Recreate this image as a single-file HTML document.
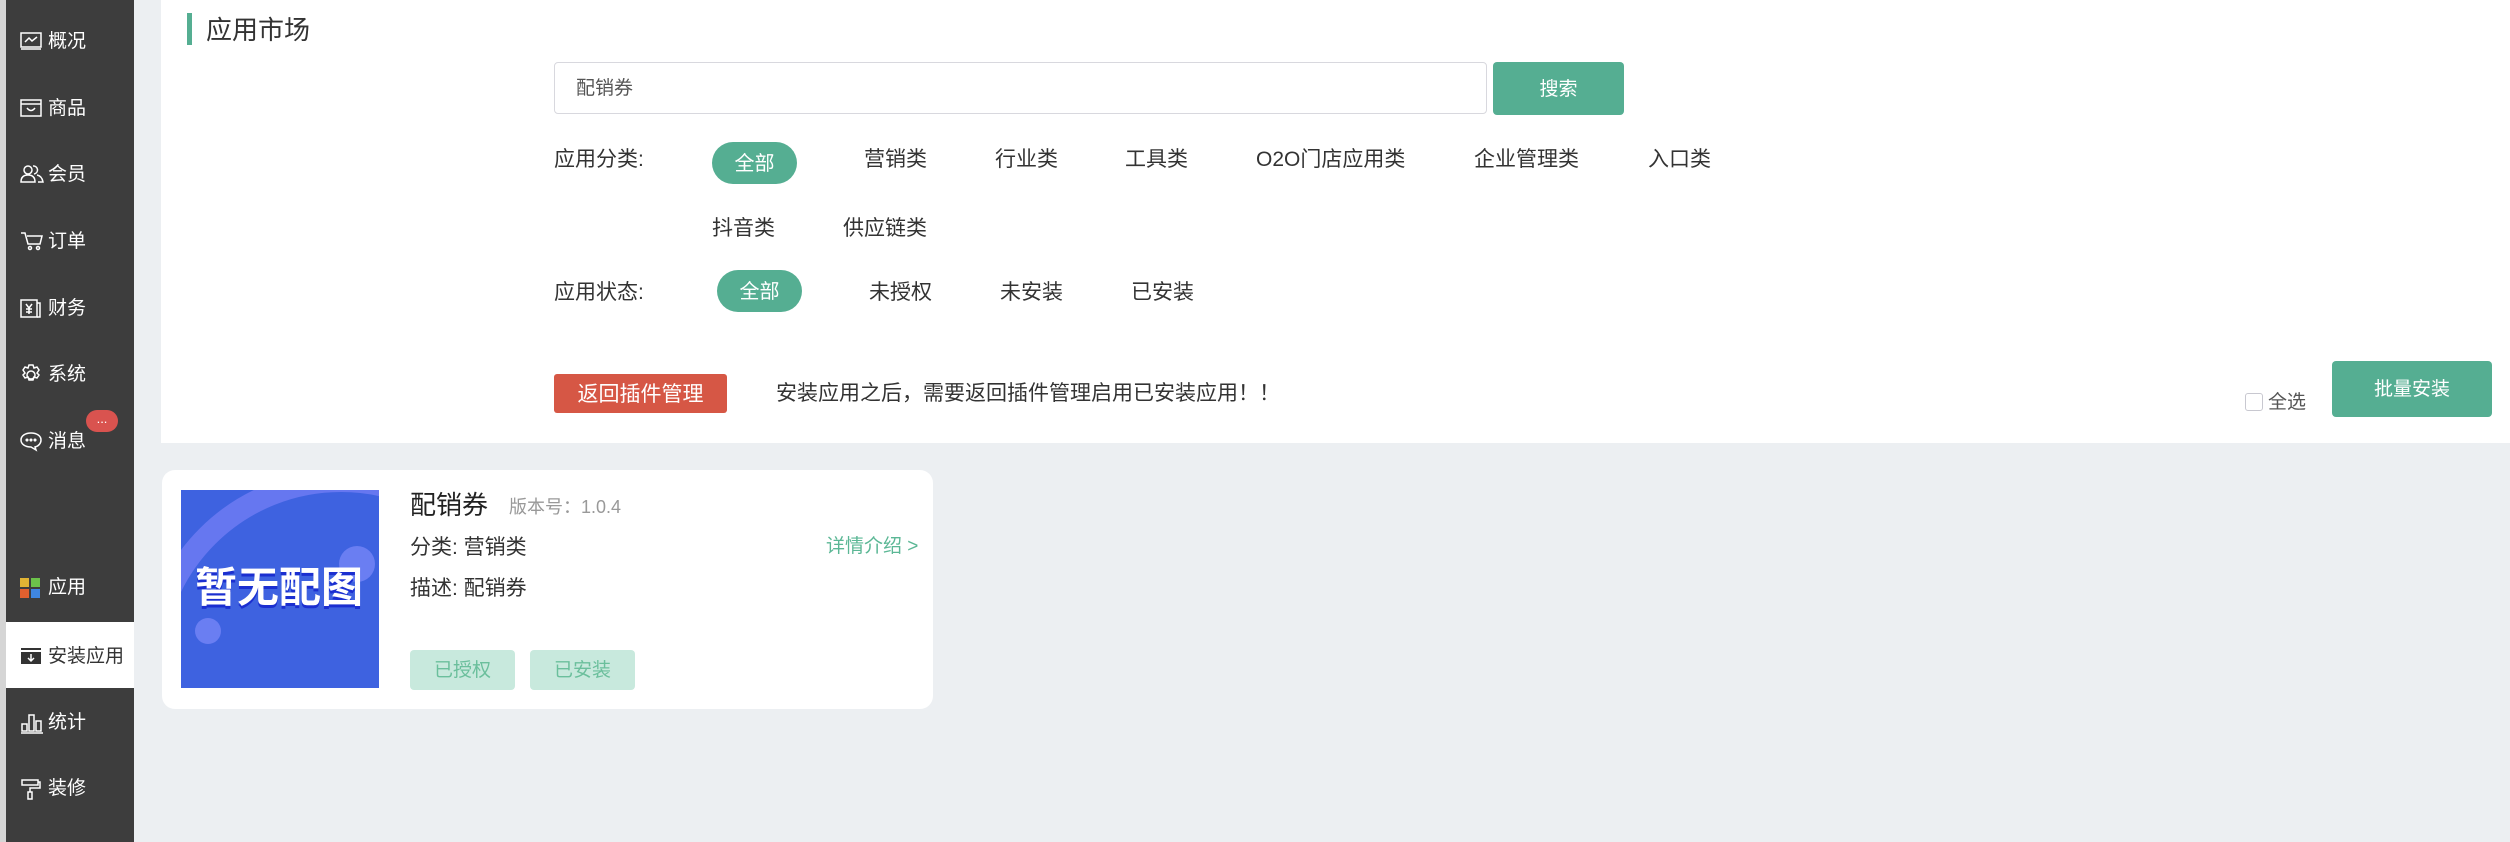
<!DOCTYPE html>
<html><head><meta charset="utf-8"><style>
*{margin:0;padding:0;box-sizing:border-box}
body{width:2510px;height:842px;background:#eceff2;position:relative;overflow:hidden;font-family:"Liberation Sans","Noto Sans CJK SC",sans-serif;color:#333}
.a{position:absolute;white-space:nowrap}
#strip{left:0;top:0;width:6px;height:842px;background:#d5d5d5}
#side{left:6px;top:0;width:128px;height:842px;background:#3d3d3d}
.it{position:absolute;left:6px;width:128px;height:66px;color:#fff;font-size:19px;line-height:66px}
.it span{position:absolute;left:42px;top:2px}
.it svg{position:absolute;left:14px;top:24px}
#panel{left:161px;top:0;width:2349px;height:443px;background:#fff}
.pill{position:absolute;background:#55ae92;color:#fff;border-radius:21px;text-align:center;font-size:20px}
.t{font-size:21px;color:#333;line-height:30px}
</style></head><body>
<div class="a" id="strip"></div>
<div class="a" id="side"></div>
<div class="it" style="top:7px"><svg width="22" height="20" viewBox="0 0 22 20" fill="none" stroke="#fff" stroke-width="1.5"><rect x="1" y="2" width="20" height="14"/><path d="M1 18h20M5 11l4-4 3 3 5-4"/></svg><span>概况</span></div>
<div class="it" style="top:74px"><svg width="22" height="20" viewBox="0 0 22 20" fill="none" stroke="#fff" stroke-width="1.5"><rect x="1" y="2" width="20" height="16"/><path d="M1 6h20M7 10q4 5 8 0"/></svg><span>商品</span></div>
<div class="it" style="top:140px"><svg width="24" height="20" viewBox="0 0 24 20" fill="none" stroke="#fff" stroke-width="1.5"><circle cx="8" cy="6" r="4"/><path d="M1 18q0-7 7-7t7 7z"/><path d="M13 2a4 4 0 1 1 1 8M17 11q5 1 6 7h-5"/></svg><span>会员</span></div>
<div class="it" style="top:207px"><svg width="24" height="20" viewBox="0 0 24 20" fill="none" stroke="#fff" stroke-width="1.5"><path d="M1 2h4l3 11h12l2-8H7"/><circle cx="10" cy="17" r="1.5"/><circle cx="18" cy="17" r="1.5"/></svg><span>订单</span></div>
<div class="it" style="top:274px"><svg width="22" height="22" viewBox="0 0 22 22" fill="none" stroke="#fff" stroke-width="1.5"><rect x="1" y="2" width="16" height="17"/><path d="M17 5h3v14h-3M6 6l3 4 3-4M9 10v6M6 11h6M6 14h6"/></svg><span>财务</span></div>
<div class="it" style="top:340px"><svg width="22" height="22" viewBox="0 0 22 22" fill="none" stroke="#fff" stroke-width="1.5"><circle cx="11" cy="11" r="4"/><path d="M9 1h4l1 3 3-1 2 3-2 3 2 2-2 3-3-1-1 3H9l-1-3-3 1-2-3 2-2-2-3 2-3 3 1z"/></svg><span>系统</span></div>
<div class="it" style="top:407px"><svg width="24" height="22" viewBox="0 0 24 22" fill="none" stroke="#fff" stroke-width="1.5"><path d="M11 2C5 2 1 5 1 9s4 7 10 7l5 3-1-3c4-1 6-4 6-7 0-4-4-7-10-7z"/><circle cx="7" cy="9" r=".8"/><circle cx="11" cy="9" r=".8"/><circle cx="15" cy="9" r=".8"/></svg><span>消息</span></div>
<div class="a" style="left:86px;top:410px;width:32px;height:22px;border-radius:11px;background:#d9534f;color:#fff;font-size:13px;text-align:center;line-height:18px">...</div>
<div class="it" style="top:553px"><svg width="22" height="22" viewBox="0 0 22 22"><rect x="0" y="1" width="9" height="9" fill="#e0b434"/><rect x="11" y="1" width="9" height="9" fill="#6cc24a"/><rect x="0" y="12" width="9" height="9" fill="#e0602f"/><rect x="11" y="12" width="9" height="9" fill="#3f86e0"/></svg><span>应用</span></div>
<div class="it" style="top:622px;background:#fff;color:#333"><svg width="22" height="20" viewBox="0 0 22 20"><rect x="1" y="2" width="20" height="2" fill="#333"/><rect x="1" y="6" width="20" height="12" fill="#333"/><path d="M11 8v7M8 12l3 3 3-3" stroke="#fff" stroke-width="1.5" fill="none"/></svg><span>安装应用</span></div>
<div class="it" style="top:688px"><svg width="24" height="22" viewBox="0 0 24 22" fill="none" stroke="#fff" stroke-width="1.5"><rect x="2" y="12" width="5" height="7"/><rect x="9" y="3" width="5" height="16"/><rect x="16" y="9" width="5" height="10"/><path d="M1 21h22"/></svg><span>统计</span></div>
<div class="it" style="top:754px"><svg width="22" height="22" viewBox="0 0 22 22" fill="none" stroke="#fff" stroke-width="1.5"><rect x="2" y="2" width="16" height="5"/><path d="M18 4h2v6H10v4"/><rect x="8" y="14" width="4" height="7"/></svg><span>装修</span></div>

<div class="a" id="panel"></div>
<div class="a" style="left:187px;top:13px;width:5px;height:32px;background:#55ae92"></div>
<div class="a" style="left:206px;top:13px;font-size:26px;line-height:34px;color:#333">应用市场</div>
<div class="a" style="left:554px;top:62px;width:933px;height:52px;border:1px solid #d8d8de;border-radius:4px;font-size:19px;color:#555;line-height:52px;padding-left:21px">配销券</div>
<div class="a" style="left:1493px;top:62px;width:131px;height:53px;background:#55ae92;border-radius:4px;color:#fff;font-size:19px;text-align:center;line-height:55px">搜索</div>
<div class="a t" style="left:554px;top:145px">应用分类:</div>
<div class="pill" style="left:712px;top:142px;width:85px;height:42px;line-height:44px">全部</div>
<div class="a t" style="left:864px;top:145px">营销类</div>
<div class="a t" style="left:995px;top:145px">行业类</div>
<div class="a t" style="left:1125px;top:145px">工具类</div>
<div class="a t" style="left:1256px;top:145px">O2O门店应用类</div>
<div class="a t" style="left:1474px;top:145px">企业管理类</div>
<div class="a t" style="left:1648px;top:145px">入口类</div>
<div class="a t" style="left:712px;top:214px">抖音类</div>
<div class="a t" style="left:843px;top:214px">供应链类</div>
<div class="a t" style="left:554px;top:278px">应用状态:</div>
<div class="pill" style="left:717px;top:270px;width:85px;height:42px;line-height:44px">全部</div>
<div class="a t" style="left:869px;top:278px">未授权</div>
<div class="a t" style="left:1000px;top:278px">未安装</div>
<div class="a t" style="left:1131px;top:278px">已安装</div>
<div class="a" style="left:554px;top:374px;width:173px;height:39px;background:#d65745;border-radius:3px;color:#fff;font-size:21px;text-align:center;line-height:41px">返回插件管理</div>
<div class="a t" style="left:776px;top:379px">安装应用之后，需要返回插件管理启用已安装应用！！</div>
<div class="a" style="left:2245px;top:393px;width:18px;height:18px;border:1px solid #c8c8d0;border-radius:3px;background:#fff"></div>
<div class="a" style="left:2268px;top:389px;font-size:19px;color:#555;line-height:28px">全选</div>
<div class="a" style="left:2332px;top:361px;width:160px;height:56px;background:#55ae92;border-radius:4px;color:#fff;font-size:19px;text-align:center;line-height:58px">批量安装</div>

<div class="a" style="left:162px;top:470px;width:771px;height:239px;background:#fff;border-radius:13px"></div>
<div class="a" style="left:181px;top:490px;width:198px;height:198px;background:#3e62e0;overflow:hidden">
<div style="position:absolute;left:-40px;top:-20px;width:400px;height:400px;border-radius:50%;border:22px solid #6677f0"></div>
<div style="position:absolute;left:158px;top:56px;width:36px;height:36px;border-radius:50%;background:#6a7ef2"></div>
<div style="position:absolute;left:14px;top:128px;width:26px;height:26px;border-radius:50%;background:#6a7ef2"></div>
<div style="position:absolute;left:14px;top:73px;font-size:42px;font-weight:bold;color:#fff;line-height:50px;text-shadow:0 3px 0 #1b2fd0">暂无配图</div>
</div>
<div class="a" style="left:410px;top:487px;font-size:26px;line-height:36px;color:#222">配销券</div>
<div class="a" style="left:509px;top:494px;font-size:18px;line-height:26px;color:#999">版本号：1.0.4</div>
<div class="a t" style="left:410px;top:533px">分类: 营销类</div>
<div class="a" style="left:826px;top:534px;font-size:19px;line-height:26px;color:#5bb795">详情介绍 &gt;</div>
<div class="a t" style="left:410px;top:574px">描述: 配销券</div>
<div class="a" style="left:410px;top:650px;width:105px;height:40px;background:#c8e9dd;border-radius:4px;color:#6bbf9c;font-size:19px;text-align:center;line-height:42px">已授权</div>
<div class="a" style="left:530px;top:650px;width:105px;height:40px;background:#c8e9dd;border-radius:4px;color:#6bbf9c;font-size:19px;text-align:center;line-height:42px">已安装</div>
</body></html>
